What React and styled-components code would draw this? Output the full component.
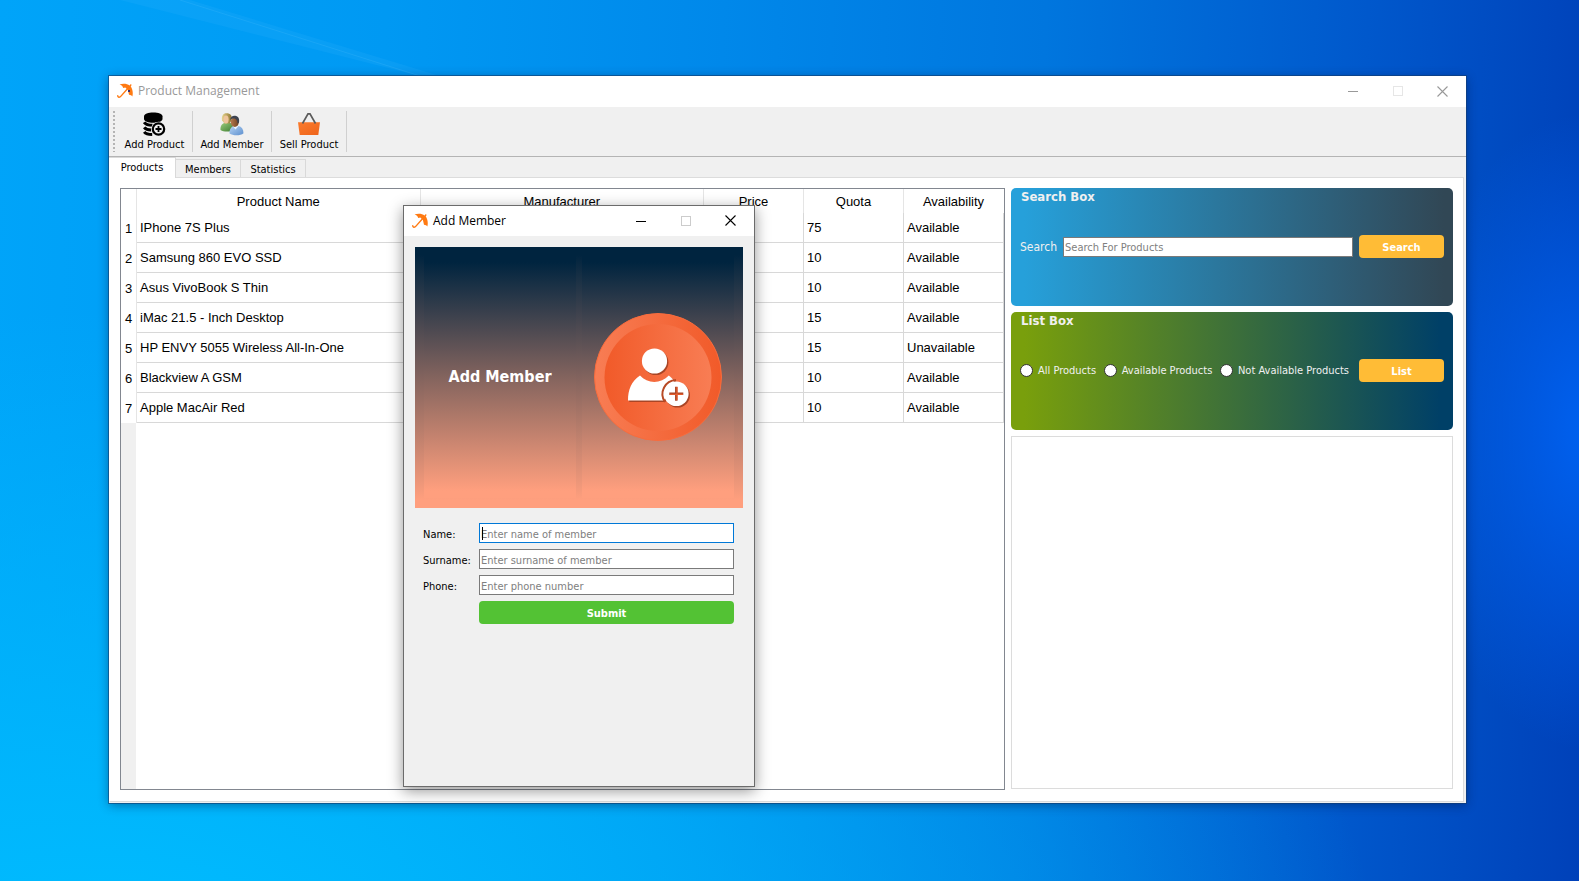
import React from "react";
import styled, { createGlobalStyle, css } from "styled-components";

const ui = `"DejaVu Sans Condensed", "DejaVu Sans", sans-serif`;
const caption = `"Open Sans", "Noto Sans", sans-serif`;
const grid = `"Liberation Sans", Arial, sans-serif`;

const GlobalStyle = createGlobalStyle`
  *, *::before, *::after { box-sizing: border-box; }
  body { margin: 0; font-family: ${ui}; font-size: 11px; color: #000; }
  button, input { font: inherit; margin: 0; }
`;

const Desktop = styled.div`
  position: relative;
  display: flex;
  min-height: 100vh;
  padding: 76px 113px 78px 109px;
  background:
    radial-gradient(ellipse 190px 320px at 101% 49%, #0062f2 0%, rgba(0, 95, 240, 0) 100%),
    radial-gradient(ellipse 1250px 640px at 8% 108%, rgba(0, 190, 255, 0.95) 0%, rgba(0, 184, 252, 0.65) 45%, rgba(0, 160, 245, 0) 100%),
    linear-gradient(92deg, #00a4f9 0%, #0099f3 24%, #0088ea 45%, #0076de 65%, #0058cc 85%, #0041b9 100%);
`;

const Streak = styled.svg`
  position: absolute;
  left: 0;
  top: 0;
`;

const MainWindow = styled.main`
  position: relative;
  flex: 1;
  display: flex;
  flex-direction: column;
  min-width: 0;
  background: #f0f0f0;
  box-shadow: 0 0 0 1px rgba(20, 60, 110, 0.6), 0 2px 10px rgba(0, 20, 60, 0.45);
`;

const TitleBar = styled.header`
  display: flex;
  align-items: center;
  flex: none;
  height: ${(p) => (p.$dialog ? "30px" : "31px")};
  padding: 0 1px 1px 8px;
  background: #fff;
  color: ${(p) => (p.$dialog ? "#000" : "#999")};
  font-family: ${caption};
  font-size: 12px;
`;

const TitleText = styled.h1`
  flex: 1;
  margin: 0 0 0 5px;
  font-size: 12px;
  font-weight: 400;
  line-height: 16px;
`;

const CaptionButton = styled.button`
  display: grid;
  place-items: center;
  width: 45px;
  height: 28px;
  padding: 0;
  border: 0;
  background: none;
  color: ${(p) => (p.$faint ? (p.$dialog ? "#ccc" : "#e6e6e6") : p.$dialog ? "#000" : "#999")};
`;

const ToolBar = styled.div`
  display: flex;
  flex: none;
  height: 50px;
  padding: 4px 0 4px 4px;
  border-bottom: 1px solid #b4b4b4;
`;

const Grip = styled.span`
  width: 2px;
  margin-right: 2px;
  background: repeating-linear-gradient(#b4b4b4 0 2px, transparent 2px 4px);
`;

const ToolButton = styled.button`
  display: flex;
  flex-direction: column;
  align-items: center;
  width: ${(p) => p.$width};
  padding: 1px 0 0;
  border: 0;
  border-right: 1px solid #d0d0d0;
  background: none;
  color: #000;
  line-height: 14px;
  white-space: nowrap;

  svg { margin-bottom: 2px; }
`;

const Tabs = styled.div`
  display: flex;
  align-items: flex-end;
  flex: none;
  height: 20px;
`;

const Tab = styled.button`
  height: ${(p) => (p.$active ? "21px" : "18px")};
  width: ${(p) => (p.$active ? "67px" : "65px")};
  margin-bottom: ${(p) => (p.$active ? "-1px" : "0")};
  padding: ${(p) => (p.$active ? "0 0 1px" : "1px 0 0")};
  position: relative;
  border: 1px solid #d9d9d9;
  border-width: 1px 1px 0 0;
  background: ${(p) => (p.$active ? "#fff" : "#f0f0f0")};
  color: #000;
  white-space: nowrap;
`;

const Page = styled.section`
  flex: 1;
  display: grid;
  grid-template-columns: minmax(0, 1fr) 442px;
  gap: 6px;
  margin: 0 2px 1px 0;
  padding: 10px 10px 11px;
  border: 1px solid #dcdcdc;
  border-left-color: #fff;
  background: #fff;
`;

const TableFrame = styled.div`
  border: 1px solid #828790;
  background: linear-gradient(90deg, #f0f0f0 15px, #fff 15px);
`;

const Table = styled.table`
  width: 100%;
  table-layout: fixed;
  border-spacing: 0;
  background: #fff;
  font-family: ${grid};
  font-size: 13px;
  line-height: 16px;

  th { font-weight: 400; }
  thead th { height: 24px; padding: 1px 0 0; border-right: 1px solid #e5e5e5; }
  thead th:last-child { border-right-color: #fff; }
  tbody th { padding: 1px 0 0; border-right: 1px solid #e5e5e5; }
  td { height: 30px; padding: 0 3px; border-right: 1px solid #d8d8d8; border-bottom: 1px solid #d8d8d8; }
`;

const Col = styled.col`
  width: ${(p) => p.$width || "auto"};
`;

const Side = styled.aside`
  display: flex;
  flex-direction: column;
  gap: 6px;
  padding-bottom: 1px;
`;

const Box = styled.form`
  height: 118px;
  padding: 0 9px;
  border-radius: 5px;
  background: ${(p) => p.$fill};
  color: #f0f0f0;
`;

const BoxTitle = styled.h2`
  margin: 0;
  padding: 0 1px;
  height: 47px;
  font-size: 13px;
  font-weight: 700;
  line-height: 17px;
`;

const BoxRow = styled.div`
  display: flex;
  align-items: center;
  height: 23px;
`;

const SearchLabel = styled.label`
  width: 43px;
  padding-top: 1px;
  font-size: 12px;
`;

const field = css`
  height: 20px;
  padding: 2px 1px 0;
  border: 1px solid ${(p) => (p.$focused ? "#0078d7" : "#7a7a7a")};
  border-radius: 0;
  outline: 0;
  background: #fff;
  color: #000;

  &::placeholder { color: #808080; opacity: 1; }
`;

const SearchInput = styled.input`
  ${field}
  flex: 1;
  min-width: 0;
  margin-right: 6px;
`;

const PushButton = styled.button`
  width: ${(p) => (p.$wide ? "100%" : "85px")};
  height: 23px;
  padding: 1px 0 0;
  border: 0;
  border-radius: 4px;
  background: ${(p) => (p.$wide ? "#53c234" : "#ffbc36")};
  color: #fff;
  font-weight: 700;
`;

const Radios = styled.div`
  flex: 1;
  display: flex;
  justify-content: space-between;
  margin-right: 10px;
`;

const RadioLabel = styled.label`
  display: flex;
  align-items: center;
  gap: 5px;
  white-space: nowrap;
`;

const Radio = styled.input`
  appearance: none;
  width: 13px;
  height: 13px;
  border: 1px solid #333;
  border-radius: 50%;
  background: #fff;
`;

const ResultFrame = styled.div`
  flex: 1;
  border: 1px solid #dcdcdc;
`;

const Dialog = styled.div`
  position: absolute;
  left: 294px;
  top: 129px;
  width: 352px;
  height: 582px;
  display: flex;
  flex-direction: column;
  border: 1px solid #6b6b6b;
  background: #f0f0f0;
  box-shadow: 0 4px 14px rgba(0, 0, 0, 0.42);
`;

const duskFill = css`
  background: linear-gradient(#00243f 0%, #00243f 3%, #88665f 52%, #ff9f7e 97%, #ff9f7e 100%);
`;

const Banner = styled.div`
  ${duskFill}
  display: grid;
  grid-template-columns: 1fr 1fr;
  gap: 6px;
  height: 261px;
  margin: 11px 11px 0;
  padding: 8px 9px 10px;
`;

const BannerPart = styled.div`
  ${duskFill}
  display: grid;
  place-items: center;
  color: #fff;
  font-size: 16px;
  font-weight: 700;
`;

const MemberForm = styled.form`
  display: grid;
  grid-template-columns: 56px 1fr;
  align-items: center;
  row-gap: 6px;
  padding: 15px 20px 0 19px;
`;

const FieldLabel = styled.label`
  padding-top: 2px;
`;

const FieldWrap = styled.div`
  position: relative;
  display: flex;
  grid-column: 2;
`;

const FieldInput = styled.input`
  ${field}
  width: 100%;
`;

const Caret = styled.span`
  position: absolute;
  left: 3px;
  top: 4px;
  width: 1px;
  height: 13px;
  background: #000;
`;

const UmbrellaIcon = ({ dot }) => (
  <svg width="16" height="16" viewBox="0 0 16 16" aria-hidden="true">
    <path d="M2.600 1.300C6 .4 10.200.5 12.600 2.400l1.200-1.300.9.8-1 1.300C15.900 6.500 16.200 10.500 15.300 13.600c-.6-1-1.800-1.700-3.300-1.800L10.900 7 8.300 4.600 6.200 4.900C5.800 3.300 4.500 2 2.600 1.300Z" fill="#ff7a12" />
    <path d="M10.500 5.800 4.200 12.900c-.8 1-1.700 1.700-2.600 1.300-.8-.4-.9-1.300-.7-2" fill="none" stroke="#ff7a12" strokeWidth="1.400" />
    {dot && <rect x="11" y="7" width="2" height="2" fill="#3b3070" />}
  </svg>
);

const DatabaseIcon = () => (
  <svg width="24" height="24" viewBox="0 0 24 24" aria-hidden="true">
    <path d="M1 4.300C1 1.800 5.300.5 10.300.5s9.200 1.300 9.200 3.800V7c0 2.300-4.200 3.700-9.200 3.700S1 9.300 1 7Z" fill="#000" />
    <g fill="none" stroke="#000" strokeWidth="3">
      <path d="M1.200 10.300c1.500 2.200 4 3 8.300 3" />
      <path d="M1.200 15.300c1.500 2 4 2.700 7 2.700" />
      <path d="M1.200 19.800c1.500 2 4.500 2.700 8 2.700" />
    </g>
    <circle cx="15.500" cy="17" r="7.300" fill="#f0f0f0" />
    <circle cx="15.500" cy="17" r="5.700" fill="none" stroke="#000" strokeWidth="2.200" />
    <path d="M15.500 14v6M12.500 17h6" stroke="#000" strokeWidth="1.800" />
  </svg>
);

const PeopleIcon = () => (
  <svg width="24" height="24" viewBox="0 0 24 24" aria-hidden="true">
    <defs>
      <linearGradient id="green" x2="1" y2="1"><stop stopColor="#9acb7c" /><stop offset="1" stopColor="#3d7d31" /></linearGradient>
      <linearGradient id="blue" x2="1" y2="1"><stop stopColor="#b5d3f3" /><stop offset="1" stopColor="#5d8fce" /></linearGradient>
      <linearGradient id="blonde" x2="1"><stop stopColor="#e6d590" /><stop offset="1" stopColor="#8e7430" /></linearGradient>
      <linearGradient id="brown" x2="1"><stop stopColor="#b5794e" /><stop offset="1" stopColor="#734321" /></linearGradient>
    </defs>
    <path d="M.5 18c-.4-4 1.500-6.500 5-7.200h4c3 .6 4 2.500 4 7.200-3 2-10 2-13 0Z" fill="url(#green)" />
    <path d="M2 8.500C1.300 4 3 1.300 6.500 1.300c4 0 6 2.400 5 7.200l-2 3h-5Z" fill="url(#blonde)" />
    <ellipse cx="6" cy="7.500" rx="2.600" ry="3.900" fill="#efc49c" />
    <path d="M9.500 21.500c-.2-4 1.500-7 5-7.500h4c3 .6 5 3 5 7.200-3 2.800-10.500 2.800-14 .3Z" fill="url(#blue)" />
    <path d="m12.500 14 3 3.500 3-3.500Z" fill="#e8f3ff" />
    <ellipse cx="14.800" cy="10" rx="4" ry="5" fill="url(#brown)" />
    <path d="M10 8c.4-3.300 2.700-4.600 5.200-4.300 3 .3 4.600 2.800 3.800 6.800l-1.500 1c0-2.500-.8-4-2.400-4.800-2-.3-3.300 0-5.100 1.300Z" fill="#3d4350" />
  </svg>
);

const BasketIcon = () => (
  <svg width="24" height="24" viewBox="0 0 24 24" aria-hidden="true">
    <defs><linearGradient id="basket" y2="1"><stop stopColor="#fb7b2c" /><stop offset="1" stopColor="#ee641b" /></linearGradient></defs>
    <path d="M1 10.300h22L21.300 23H2.700Z" fill="url(#basket)" />
    <path d="M5.500 11.500 11 1.800h2l5.500 9.700" fill="none" stroke="#5b5b5b" strokeWidth="1.700" />
  </svg>
);

const AddMemberBadge = () => (
  <svg width="128" height="128" viewBox="0 0 128 128" aria-hidden="true">
    <defs>
      <linearGradient id="rim"><stop stopColor="#f87d54" /><stop offset="1" stopColor="#f15a29" /></linearGradient>
      <linearGradient id="disc"><stop stopColor="#f15a29" /><stop offset="1" stopColor="#f87d54" /></linearGradient>
    </defs>
    <circle cx="64" cy="64" r="63.500" fill="url(#rim)" stroke="#f86c3d" />
    <circle cx="64" cy="64.500" r="53.500" fill="url(#disc)" />
    <g fill="#a94525" transform="translate(1.300 1.500)">
      <circle cx="60.500" cy="48" r="12.600" />
      <path d="M34 87.500c0-11 3.500-19.500 12-25 7.500 8.500 21 8.500 28.800 0L82 68l-12 19.500Z" />
      <circle cx="82.300" cy="80.700" r="12.300" />
    </g>
    <circle cx="60.500" cy="48" r="12.600" fill="#fff" />
    <path d="M34 87.500c0-11 3.500-19.500 12-25 7.500 8.500 21 8.500 28.800 0 2.200 1.500 3.700 3 5.200 5.500L70 87.500Z" fill="#fff" />
    <path d="M71 89a14 14 0 0 1 11-22" fill="none" stroke="#b84a25" strokeWidth="2" />
    <circle cx="82.300" cy="80.700" r="12.300" fill="#fff" />
    <path d="M82.300 73.700v14M75.300 80.700h14" stroke="#a94525" strokeWidth="2.500" />
    <path d="M83 74v13M76 81.300h13" stroke="#f4622f" strokeWidth="1" />
  </svg>
);

const Caption = ({ title, dialog }) => (
  <TitleBar $dialog={dialog}>
    <UmbrellaIcon dot={!dialog} />
    <TitleText>{title}</TitleText>
    <CaptionButton type="button" $dialog={dialog} aria-label="Minimize">
      <svg width="10" height="10"><path d="M0 5.500h10" stroke="currentColor" /></svg>
    </CaptionButton>
    <CaptionButton type="button" $dialog={dialog} $faint aria-label="Maximize">
      <svg width="10" height="10"><rect x=".5" y=".5" width="9" height="9" fill="none" stroke="currentColor" /></svg>
    </CaptionButton>
    <CaptionButton type="button" $dialog={dialog} aria-label="Close">
      <svg width="11" height="11"><path d="m.5.5 10 10m0-10-10 10" stroke="currentColor" strokeWidth="1.100" /></svg>
    </CaptionButton>
  </TitleBar>
);

const products = [
  ["IPhone 7S Plus", 75, "Available"],
  ["Samsung 860 EVO SSD", 10, "Available"],
  ["Asus VivoBook S Thin", 10, "Available"],
  ["iMac 21.5 - Inch Desktop", 15, "Available"],
  ["HP ENVY 5055 Wireless All-In-One", 15, "Unavailable"],
  ["Blackview A GSM", 10, "Available"],
  ["Apple MacAir Red", 10, "Available"],
];

const fields = [
  ["name", "Name:", "Enter name of member"],
  ["surname", "Surname:", "Enter surname of member"],
  ["phone", "Phone:", "Enter phone number"],
];

export default function App() {
  return (
    <>
      <GlobalStyle />
      <Desktop>
        <Streak width="440" height="76" aria-hidden="true">
          <path d="M120 0h70L440 76h-20Z" fill="#4cc0ff" opacity=".12" />
          <path d="m180 0 240 76" stroke="#6cccff" opacity=".15" />
        </Streak>
        <MainWindow>
          <Caption title="Product Management" />
          <ToolBar>
            <Grip />
            <ToolButton type="button" $width="76px"><DatabaseIcon />Add Product</ToolButton>
            <ToolButton type="button" $width="79px"><PeopleIcon />Add Member</ToolButton>
            <ToolButton type="button" $width="75px"><BasketIcon />Sell Product</ToolButton>
          </ToolBar>
          <Tabs role="tablist">
            <Tab type="button" role="tab" aria-selected="true" $active>Products</Tab>
            <Tab type="button" role="tab" aria-selected="false">Members</Tab>
            <Tab type="button" role="tab" aria-selected="false">Statistics</Tab>
          </Tabs>
          <Page>
            <TableFrame>
              <Table>
                <colgroup>
                  <Col $width="16px" /><Col /><Col />
                  <Col $width="100px" /><Col $width="100px" /><Col $width="100px" />
                </colgroup>
                <thead>
                  <tr>
                    <th aria-label="Row" />
                    <th>Product Name</th>
                    <th>Manufacturer</th>
                    <th>Price</th>
                    <th>Quota</th>
                    <th>Availability</th>
                  </tr>
                </thead>
                <tbody>
                  {products.map(([name, quota, state], i) => (
                    <tr key={name}>
                      <th scope="row">{i + 1}</th>
                      <td>{name}</td>
                      <td />
                      <td />
                      <td>{quota}</td>
                      <td>{state}</td>
                    </tr>
                  ))}
                </tbody>
              </Table>
            </TableFrame>
            <Side>
              <Box $fill="linear-gradient(90deg, #26a0da 0%, #26a0da 3%, #314755 98%)">
                <BoxTitle>Search Box</BoxTitle>
                <BoxRow>
                  <SearchLabel htmlFor="search">Search</SearchLabel>
                  <SearchInput id="search" placeholder="Search For Products" />
                  <PushButton type="button">Search</PushButton>
                </BoxRow>
              </Box>
              <Box $fill="linear-gradient(90deg, #799f0c 0%, #799f0c 3%, #004067 97%)">
                <BoxTitle>List Box</BoxTitle>
                <BoxRow>
                  <Radios>
                    <RadioLabel><Radio type="radio" name="list" />All Products</RadioLabel>
                    <RadioLabel><Radio type="radio" name="list" />Available Products</RadioLabel>
                    <RadioLabel><Radio type="radio" name="list" />Not Available Products</RadioLabel>
                  </Radios>
                  <PushButton type="button">List</PushButton>
                </BoxRow>
              </Box>
              <ResultFrame />
            </Side>
          </Page>
          <Dialog role="dialog" aria-label="Add Member">
            <Caption title="Add Member" dialog />
            <Banner>
              <BannerPart>Add Member</BannerPart>
              <BannerPart><AddMemberBadge /></BannerPart>
            </Banner>
            <MemberForm>
              {fields.map(([id, label, hint], i) => (
                <React.Fragment key={id}>
                  <FieldLabel htmlFor={id}>{label}</FieldLabel>
                  <FieldWrap>
                    <FieldInput id={id} placeholder={hint} $focused={i === 0} />
                    {i === 0 && <Caret />}
                  </FieldWrap>
                </React.Fragment>
              ))}
              <FieldWrap><PushButton type="button" $wide>Submit</PushButton></FieldWrap>
            </MemberForm>
          </Dialog>
        </MainWindow>
      </Desktop>
    </>
  );
}
